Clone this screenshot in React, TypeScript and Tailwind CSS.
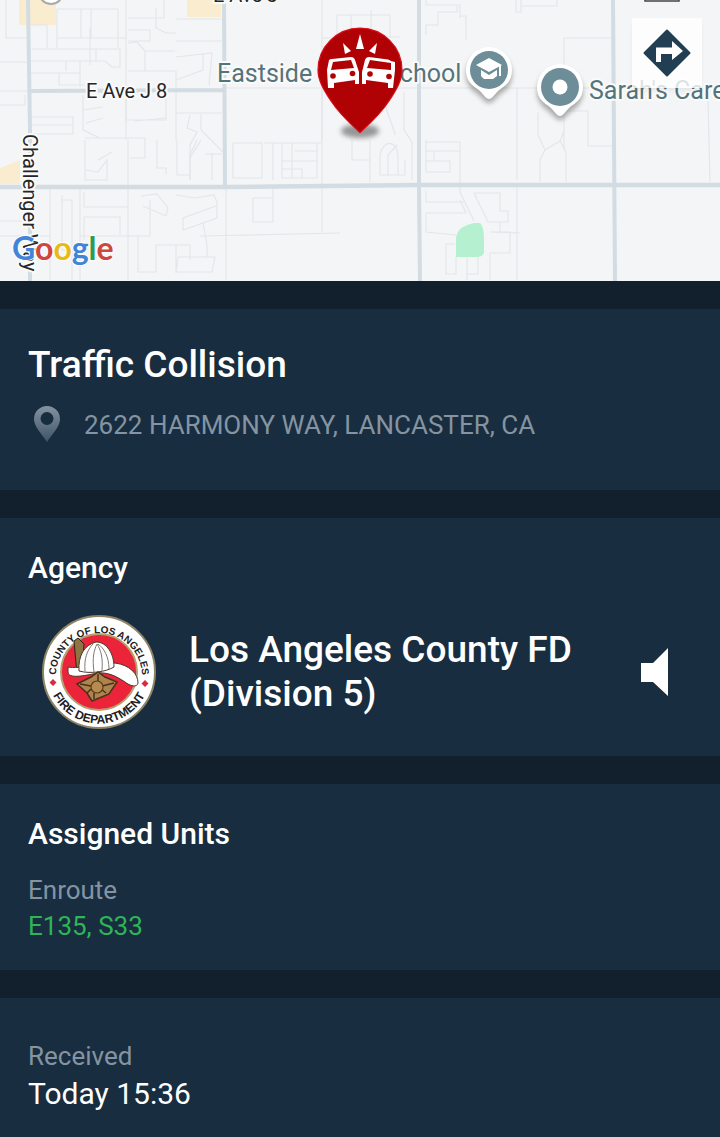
import type { ReactNode } from "react";

type SectionProps = {
  className?: string;
  children: ReactNode;
};

const minorRoads = [
  // north west blocks
  "M6 0V38H28M0 62H27M0 91H27M30 25H47V48M57 9V48M57 9H118M81 9V38M91 9V38M57 38H126M118 9V48M126 0V140M32 49H96V61H30M66 61V71M90 28V65M96 49H120V67H112L105 61H90M80 61V73M30 73H80V87M59 73V85H85",
  "M128 18H164V0M156 8V28L166 33H176M128 30H150V41H128M128 43L137 42L145 51V71M145 51H175M128 71H176V140M176 19H222M176 41H222M176 57L212 53L209 85M203 53V70L176 80",
  "M32 117H73V134H30M32 125H73M83 95V130L100 138M83 110L103 107M86 123L103 118M126 100V120H166V95M85 138H145V158H130M135 121L166 118M176 113H222M190 115L187 128L197 132L190 145V180M201 114V130L211 140M0 105H25V95",
  // west centre blocks
  "M85 140V180H107V160L98 172L86 170M98 160L112 152M128 140V182M157 140V168H166V174M177 140V175H190V155L197 140M201 140L190 158V180M211 140L225 154M212 153V180M205 154H222",
  // south west blocks
  "M50 187V280M62 195V250H80M62 200H72V280M80 187V280M84 192V207H128M84 217H120V235M80 236H150V200M84 217V240M0 221H25M0 236H50M128 182V280M138 236V272H156V245H190V260M176 245V272M176 273L178 257H215L212 272H176M141 196L157 194L168 208L166 216L143 206M176 195L195 198L214 195L217 202V218L183 230V218L216 206M203 223L207 245V257M150 225V235",
  "M226 184V280M200 236L340 233M322 0V232M273 187V217M253 198H273V222H253V198M233 143H262V178H233V143M264 143H321M273 143V180M282 143V178H317V143M282 161H317M292 143V178M282 169H302V178M295 151H317",
  // centre blocks
  "M322 38H337V15H390M351 15V37H400M371 10V37M390 15V37M226 88H620M322 88V140M352 140V160H370V140M370 140V182M385 95C385 115 392 120 395 135M404 92V130L412 142V180M380 175V155C382 140 398 138 398 158V175H380M388 176V155L397 145M405 160V175H398",
  "M426 0V5H460V18M457 6V12H438V25H426V35M460 16H466V40M516 0V12H521V0M521 6H557V0M517 88V180M564 150V38H612M588 111V146H612M588 111H566M538 112V135L545 150L540 160V182M545 150L560 141L564 131V111M560 141L566 152V182",
  "M426 140V172H450V161H426M426 151H460V142H426M434 151V161M460 142V192L474 221M426 191V202H464M426 213H466L460 200M426 213V232L456 235M474 193H500V211H508V222H488L474 193M500 222V232M490 232H510V253H490V280M490 232L520 233M517 187V280M455 244H446V274H456V257M467 257V280M478 257V274H467M708 100L710 182",
];

function MapView() {
  return (
    <div className="relative h-[281px] overflow-hidden bg-[#f4f5f6]">
      <svg
        viewBox="0 0 720 281"
        preserveAspectRatio="xMidYMid slice"
        className="block h-full w-full"
        role="img"
        aria-label="Incident map"
      >
        <defs>
          <filter id="soft" x="-50%" y="-50%" width="200%" height="200%">
            <feGaussianBlur stdDeviation="2.5" />
          </filter>
          <g id="place">
            <path
              d="M0 33C-5 33-5 28-17 20A23 23 0 1 1 17 20C5 28 5 33 0 33Z"
              fill="#777"
              opacity=".6"
              filter="url(#soft)"
            />
            <path
              d="M0 29C-3 29-5 25-9 21C-13 17-23 14-23 0A23 23 0 0 1 23 0C23 14 13 17 9 21C5 25 3 29 0 29Z"
              fill="#fff"
            />
            <circle r="19" fill="#6d8e98" />
          </g>
        </defs>

        <path d="M19 0H56V25H19ZM187 0H221V17H187Z" fill="#faeccf" />
        <path d="M0 168L20 160V184H0Z" fill="#faeccf" />
        <path
          d="M474 223H480C483 226 484 232 484 240V252C484 255 481 257 477 257H456V240C456 231 461 226 474 223Z"
          fill="#b5f1d0"
        />

        <g fill="none" stroke="#e3e6ea" strokeWidth="1.2">
          {minorRoads.map((d) => (
            <path key={d} d={d} />
          ))}
        </g>
        <g fill="none" stroke="#d2dce2">
          <path
            d="M28 0L30 130V281M30 91L224 90M224 0L225 186M419 0V185L420 281M613 0L615 281"
            strokeWidth="4"
          />
          <path d="M0 187L230 187L420 185H720" strokeWidth="4.5" />
        </g>

        <g
          fontFamily="Roboto, sans-serif"
          stroke="#fafafa"
          strokeWidth="4"
          strokeLinejoin="round"
          paintOrder="stroke"
        >
          <g fontSize="20" fill="#262626">
            <text x="213" y="2">E Ave J</text>
            <text x="86" y="98">E Ave J 8</text>
            <text transform="translate(23 134) rotate(90)">Challenger Way</text>
          </g>
          <g fontSize="25" fill="#55747a">
            <text x="217" y="82">Eastside</text>
            <text x="385" y="82">School</text>
            <text x="589" y="99">Sarah's Care</text>
          </g>
        </g>

        <circle cx="51" cy="-8" r="12" fill="#fff" stroke="#aaa" strokeWidth="2" />
        <path d="M645 -8H679V1H645Z" fill="#fff" stroke="#444" strokeWidth="1.5" />

        <use href="#place" x="489" y="70" />
        <path d="M476 65L489 58L502 65L489 72Z" fill="#fff" />
        <path d="M481 70L489 75L497 70V76L493 79H484L481 76Z" fill="#fff" />
        <path d="M500 65V76" stroke="#fff" strokeWidth="2" />
        <use href="#place" x="560" y="87" />
        <circle cx="560" cy="87" r="7.5" fill="#fff" />

        <ellipse cx="360" cy="131" rx="19" ry="7" fill="#777" opacity=".75" filter="url(#soft)" />
        <path
          d="M360 132.500C354 127 341 116 331 101C323 89 318 80 318 70A42 42 0 0 1 402 70C402 80 397 89 389 101C379 116 366 127 360 132.500Z"
          fill="#b00104"
          stroke="#d90d18"
          strokeWidth="1.2"
        />
        <g fill="#fff">
          <path d="M360 34L364 49H356ZM343 43L351 51L345 54ZM377 43L375 54L369 51Z" />
          <path d="M329 60Q330 59 332 59L351 57Q354 57 355 60L359 72V84H355V80L334 83V88H328L327 70Z" />
          <path d="M391 61Q390 60 388 59.500L369 57Q366 57 365 60L362 72V84H366V80L388 83V88H393L395 70V62Z" />
        </g>
        <g fill="#b00104">
          <path d="M333 62L351 60L354 68L331 70ZM370 60L391 63L391 70L367 68Z" />
          <circle cx="333" cy="76" r="2.800" />
          <circle cx="352.500" cy="73.500" r="2.800" />
          <circle cx="370" cy="74" r="2.800" />
          <circle cx="389" cy="76.500" r="2.800" />
        </g>

        <text
          x="12"
          y="260"
          fontFamily="Lato, sans-serif"
          fontSize="32"
          fontWeight="700"
          stroke="#fff"
          strokeWidth="2"
          paintOrder="stroke"
        >
          <tspan fill="#4285d8">G</tspan>
          <tspan fill="#cf463e">o</tspan>
          <tspan fill="#e9ba16">o</tspan>
          <tspan fill="#4285d8">g</tspan>
          <tspan fill="#2c9c50">l</tspan>
          <tspan fill="#cf463e">e</tspan>
        </text>
      </svg>

      <button
        type="button"
        aria-label="Directions"
        className="absolute top-[18px] right-[18px] flex size-[70px] items-center justify-center bg-white/80 shadow-md shadow-black/5"
      >
        <svg viewBox="0 0 48 48" className="size-12">
          <path
            d="M24 1.500L46.500 24L24 46.500L1.500 24Z"
            fill="#223e52"
            stroke="#223e52"
            strokeWidth="2"
            strokeLinejoin="round"
          />
          <path d="M13 33V18.500H29V12L40 22L29 31V25H18V33Z" fill="#fff" />
        </svg>
      </button>
    </div>
  );
}

function AgencySeal() {
  return (
    <svg
      viewBox="0 0 116 116"
      className="size-[116px] shrink-0"
      role="img"
      aria-label="County of Los Angeles Fire Department"
    >
      <defs>
        <path id="seal-top" d="M15 62A43 43 0 1 1 101 62" />
        <path id="seal-bottom" d="M6.500 58A51.500 51.500 0 0 0 109.500 58" />
      </defs>
      <circle cx="58" cy="58" r="56" fill="#fff" stroke="#8c8464" strokeWidth="2" />
      <circle cx="58" cy="58" r="38" fill="#eb2439" stroke="#b5a071" strokeWidth="2" />
      <g
        fontFamily="Liberation Sans, sans-serif"
        fontWeight="700"
        fill="#202020"
        textAnchor="middle"
      >
        <text fontSize="10">
          <textPath href="#seal-top" startOffset="50%">COUNTY OF LOS ANGELES</textPath>
        </text>
        <text fontSize="12">
          <textPath href="#seal-bottom" startOffset="50%">FIRE DEPARTMENT</textPath>
        </text>
      </g>
      <path d="M12 65L15.500 68.500L12 72L8.500 68.500ZM104 66L107.500 69.500L104 73L100.500 69.500Z" fill="#d52b43" />
      <path d="M33 27L37 24L43 30L41 60H36Z" fill="#8e7442" stroke="#2d2418" />
      <path
        d="M27 53C37 55 68 50 74 49C89 51 97 60 97 69C96 74 89 72 84 68C75 62 67 58 56 59C43 62 27 65 27 58Z"
        fill="#fff"
        stroke="#48392a"
      />
      <path
        d="M38 57C37 42 43 31 55 28C66 28 73 40 73 53C65 58 49 60 38 57Z"
        fill="#fff"
        stroke="#48392a"
      />
      <path d="M44 57C43 45 46 36 52 30M53 58C51 44 53 36 56 30M61 57C62 44 60 36 56 30M68 55C68 43 63 34 57 30" fill="none" stroke="#817b73" />
      <path d="M36 70L50 63L57 58L64 63L76 68L68 80L51 87L46 79Z" fill="#ac844c" stroke="#49301a" strokeWidth="1.500" />
      <path d="M39 70L50 72M73 69L61 72M53 85V79M65 79L60 75M46 79L50 75M57 60V68" stroke="#49301a" strokeWidth="1.500" />
      <circle cx="56" cy="73" r="6" fill="#b58b51" stroke="#5d3c20" strokeWidth="1.200" />
    </svg>
  );
}

function Section({ className = "", children }: SectionProps) {
  return <section className={`bg-[#182d3f] px-7 ${className}`}>{children}</section>;
}

export default function App() {
  return (
    <main className="flex min-h-screen flex-col gap-7 bg-[#12202d] font-[Roboto,sans-serif] text-white">
      <MapView />

      <Section className="pt-8 pb-[45px]">
        <h1 className="text-[37px] leading-12 font-medium">Traffic Collision</h1>
        <div className="mt-4 flex items-center gap-5">
          <svg viewBox="0 0 36 40" className="h-10 w-9 shrink-0" aria-hidden="true">
            <defs>
              <linearGradient id="pin" x1="0" y1="0" x2="0" y2="1">
                <stop offset="0" stopColor="#8393a1" />
                <stop offset="1" stopColor="#405467" />
              </linearGradient>
            </defs>
            <path
              fillRule="evenodd"
              d="M19 1A13 13 0 0 1 32 14C32 22 24 29 19 37C14 29 6 22 6 14A13 13 0 0 1 19 1ZM19 7A6.500 6.500 0 1 0 19 20A6.500 6.500 0 1 0 19 7Z"
              fill="url(#pin)"
            />
          </svg>
          <p className="text-[26px] leading-9 text-[#8494a2]">2622 HARMONY WAY, LANCASTER, CA</p>
        </div>
      </Section>

      <Section className="pt-8 pb-[26px]">
        <h2 className="text-[30px] leading-9 font-medium">Agency</h2>
        <div className="mt-7 flex items-center pl-[13px]">
          <AgencySeal />
          <p className="ml-8 flex-1 text-[37px] leading-11 font-medium">
            Los Angeles County FD (Division 5)
          </p>
          <button type="button" aria-label="Listen to agency" className="mr-5 shrink-0">
            <svg viewBox="0 0 32 48" className="h-12 w-8">
              <path d="M1 15H13L28 0V48L13 34H1Z" fill="#fff" />
            </svg>
          </button>
        </div>
      </Section>

      <Section className="pt-8 pb-[26px]">
        <h2 className="text-[30px] leading-9 font-medium">Assigned Units</h2>
        <p className="mt-5 text-[26px] leading-9 text-[#8494a2]">Enroute</p>
        <p className="text-[26px] leading-9 text-[#2fb457]">E135, S33</p>
      </Section>

      <Section className="grow pt-10 pb-6">
        <p className="text-[26px] leading-9 text-[#8494a2]">Received</p>
        <p className="text-[30px] leading-10">Today 15:36</p>
      </Section>
    </main>
  );
}
